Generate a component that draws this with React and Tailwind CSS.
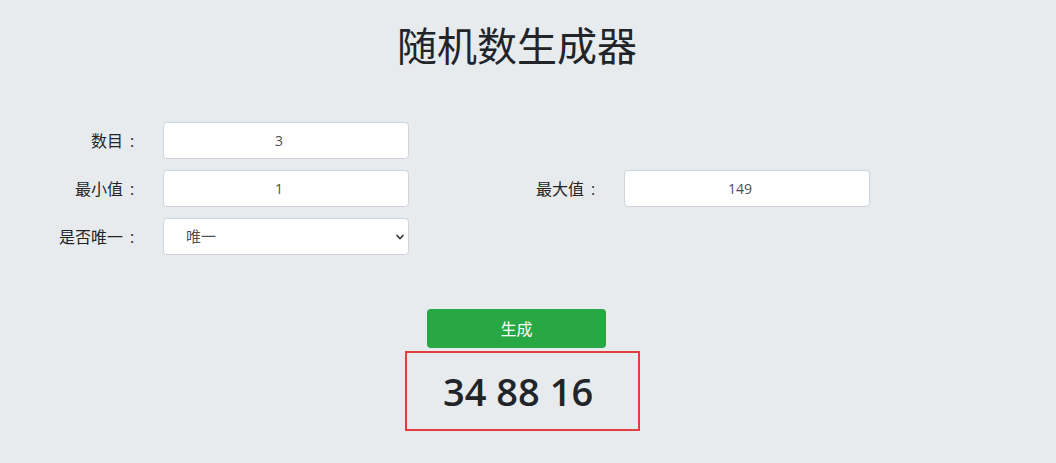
import React from "react";

const font = { fontFamily: '"Open Sans", "Noto Sans CJK SC", sans-serif' };

function Label({ text }) {
  return (
    <label className="w-[139px] flex justify-end text-[16px] text-[#212529]">
      <span>{text}</span>
      <span className="ml-[2px] w-[14px] text-center">:</span>
    </label>
  );
}

function Field({ label, value }) {
  return (
    <div className="flex items-center w-[461px]">
      <Label text={label} />
      <input
        readOnly
        value={value}
        className="ml-[24px] w-[246px] h-[37px] bg-white border border-[#ced4da] rounded-[4px] text-center pr-[14px] text-[14px] text-[#495057] outline-none"
      />
    </div>
  );
}

export default function App() {
  return (
    <div style={font} className="w-[1056px] h-[463px] bg-[#e8ebee] text-[#212529] overflow-hidden">
      <h1 className="text-center text-[40px] leading-[48px] pt-[22px] pr-[22px] font-normal">随机数生成器</h1>
      <div className="mt-[52px] flex flex-col gap-[11px]">
        <div className="flex">
          <Field label="数目" value="3" />
        </div>
        <div className="flex">
          <Field label="最小值" value="1" />
          <Field label="最大值" value="149" />
        </div>
        <div className="flex">
          <div className="flex items-center w-[461px]">
            <Label text="是否唯一" />
            <div className="ml-[24px] relative w-[246px] h-[37px]">
              <select className="appearance-none w-full h-full bg-white border border-[#ced4da] rounded-[4px] pl-[22px] text-[15px] text-[#495057] outline-none">
                <option>唯一</option>
                <option>不唯一</option>
              </select>
              <svg className="absolute right-[4px] top-[15px] pointer-events-none" width="10" height="8" viewBox="0 0 10 8">
                <path d="M1.5 2 L5 5.5 L8.5 2" fill="none" stroke="#333" strokeWidth="1.6" />
              </svg>
            </div>
          </div>
        </div>
      </div>
      <div className="mt-[54px] flex flex-col items-center">
        <button className="ml-[-23px] w-[179px] h-[39px] bg-[#28a745] rounded-[4px] text-white text-[16px]">生成</button>
        <div className="mt-[3px] ml-[-11px] w-[235px] h-[80px] border-2 border-[#e53e3e] flex items-center">
          <span className="pl-[36px] text-[38px] font-semibold leading-none text-[#212529]">34 88 16</span>
        </div>
      </div>
    </div>
  );
}
